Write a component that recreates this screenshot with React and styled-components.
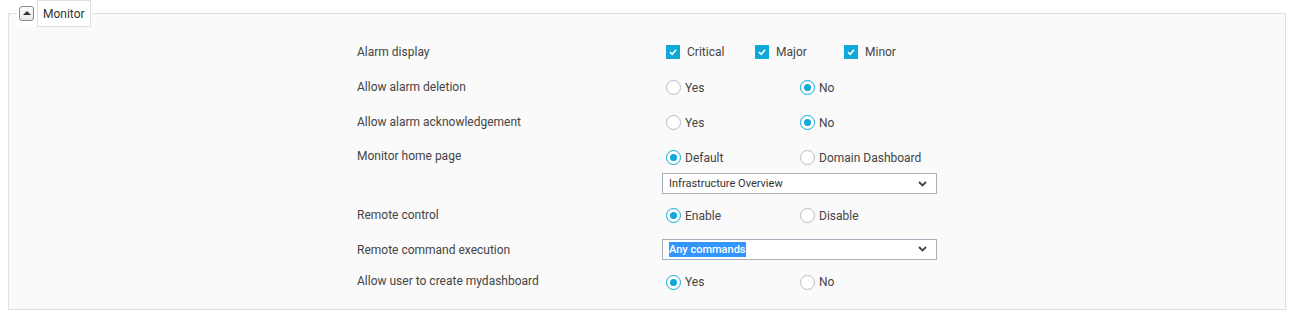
import React from "react";
import styled, { createGlobalStyle } from "styled-components";

const GlobalStyle = createGlobalStyle`
  html, body {
    margin: 0;
    padding: 0;
    background: #ffffff;
  }
  body {
    font-family: Roboto, "Liberation Sans", Arial, sans-serif;
    font-size: 12px;
    color: #444;
  }
`;

const Page = styled.div`
  padding: 0 4px 0 8px;
`;

const Fieldset = styled.fieldset`
  margin: 0;
  padding: 7px 0 13px 0;
  border: 1px solid #e0e0e0;
  background: #fafafa;
  min-width: 0;
`;

const Legend = styled.legend`
  display: flex;
  align-items: center;
  gap: 3px;
  height: 27px;
  padding: 0 1px 0 2px;
  margin-left: 8px;
  background: #fff;
`;

const Toggle = styled.button`
  width: 15px;
  height: 15px;
  padding: 0;
  border: 1px solid #8a8a8a;
  border-radius: 3px;
  background: linear-gradient(#fdfdfd, #e9e9e9);
  display: grid;
  place-items: center;
  cursor: pointer;
  &::after {
    content: "";
    width: 0;
    height: 0;
    border-left: 4px solid transparent;
    border-right: 4px solid transparent;
    border-bottom: 4px solid #333;
    margin-top: -1px;
  }
`;

const LegendBox = styled.div`
  height: 25px;
  display: flex;
  align-items: center;
  padding: 0 5px 0 5px;
  border: 1px solid #e0e0e0;
  background: #fff;
  font-size: 12px;
  color: #333;
`;

const Form = styled.div`
  width: 580px;
  margin: 0 auto;
`;

const Row = styled.div`
  display: grid;
  grid-template-columns: 305px 275px;
  align-items: ${(p) => (p.$top ? "start" : "center")};
  height: ${(p) => p.$h}px;
`;

const Label = styled.div`
  line-height: ${(p) => p.$lh || 20}px;
  padding-top: ${(p) => p.$dy || 0}px;
  color: #444;
  white-space: nowrap;
`;

const Control = styled.div`
  display: flex;
  flex-direction: column;
`;

const Options = styled.div`
  display: flex;
  align-items: center;
  height: ${(p) => p.$h || 20}px;
  padding-left: 4px;
  padding-top: ${(p) => p.$dy || 0}px;
`;

const Option = styled.label`
  display: flex;
  align-items: center;
  width: ${(p) => p.$w}px;
  gap: ${(p) => (p.$box ? 7 : 4)}px;
  color: #444;
  white-space: nowrap;
  cursor: pointer;
`;

const Box = styled.span`
  width: 14px;
  height: 14px;
  background: #0fa8d8;
  display: grid;
  place-items: center;
  flex: none;
`;

const Radio = styled.span`
  width: 15px;
  height: 15px;
  box-sizing: border-box;
  border-radius: 50%;
  border: 1px solid ${(p) => (p.$on ? "#0fa8d8" : "#b4bcc6")};
  background: #fff;
  display: grid;
  place-items: center;
  flex: none;
  &::after {
    content: "";
    width: 7px;
    height: 7px;
    border-radius: 50%;
    background: ${(p) => (p.$on ? "#0fa8d8" : "transparent")};
  }
`;

const Select = styled.div`
  box-sizing: border-box;
  width: 275px;
  height: 21px;
  border: 1px solid #a9b0bd;
  background: #fff;
  display: flex;
  align-items: center;
  justify-content: space-between;
  padding: 0 9px 0 6px;
  font-size: 11px;
  color: #333;
  margin: ${(p) => p.$m || "0"};
`;

const Highlight = styled.span`
  background: #3395fe;
  color: #fff;
  font-weight: 500;
  padding: 1px 0;
`;

const Check = () => (
  <svg width="10" height="10" viewBox="0 0 10 10">
    <path d="M2 5.2 L4.2 7.3 L8 2.8" fill="none" stroke="#fff" strokeWidth="1.6" />
  </svg>
);

const Chevron = () => (
  <svg width="9" height="6" viewBox="0 0 9 6">
    <path d="M1 1 L4.5 4.5 L8 1" fill="none" stroke="#444" strokeWidth="1.8" />
  </svg>
);

const CheckOption = ({ label, w }) => (
  <Option $box $w={w}>
    <Box>
      <Check />
    </Box>
    {label}
  </Option>
);

const RadioOption = ({ label, on, w = 134 }) => (
  <Option $w={w}>
    <Radio $on={on} />
    {label}
  </Option>
);

const RadioPair = ({ a, b, first, dy = 2 }) => (
  <Options $dy={dy} $h={22}>
    <RadioOption label={a} on={first} />
    <RadioOption label={b} on={!first} />
  </Options>
);

export default function App() {
  return (
    <Page>
      <GlobalStyle />
      <Fieldset>
        <Legend>
          <Toggle aria-label="collapse" />
          <LegendBox>Monitor</LegendBox>
        </Legend>
        <Form>
          <Row $h={35}>
            <Label>Alarm display</Label>
            <Options>
              <CheckOption label="Critical" w={89} />
              <CheckOption label="Major" w={89} />
              <CheckOption label="Minor" w={89} />
            </Options>
          </Row>
          <Row $h={35}>
            <Label>Allow alarm deletion</Label>
            <RadioPair a="Yes" b="No" first={false} />
          </Row>
          <Row $h={35}>
            <Label>Allow alarm acknowledgement</Label>
            <RadioPair a="Yes" b="No" first={false} />
          </Row>
          <Row $h={58} $top>
            <Label $lh={35}>Monitor home page</Label>
            <Control>
              <Options $h={35} $dy={1}>
                <RadioOption label="Default" on />
                <RadioOption label="Domain Dashboard" />
              </Options>
              <Select $m="-2px 0 0 0">
                Infrastructure Overview
                <Chevron />
              </Select>
            </Control>
          </Row>
          <Row $h={35}>
            <Label>Remote control</Label>
            <RadioPair a="Enable" b="Disable" first />
          </Row>
          <Row $h={34}>
            <Label $dy={2}>Remote command execution</Label>
            <Select>
              <Highlight>Any commands</Highlight>
              <Chevron />
            </Select>
          </Row>
          <Row $h={30}>
            <Label>Allow user to create mydashboard</Label>
            <RadioPair a="Yes" b="No" first />
          </Row>
        </Form>
      </Fieldset>
    </Page>
  );
}
